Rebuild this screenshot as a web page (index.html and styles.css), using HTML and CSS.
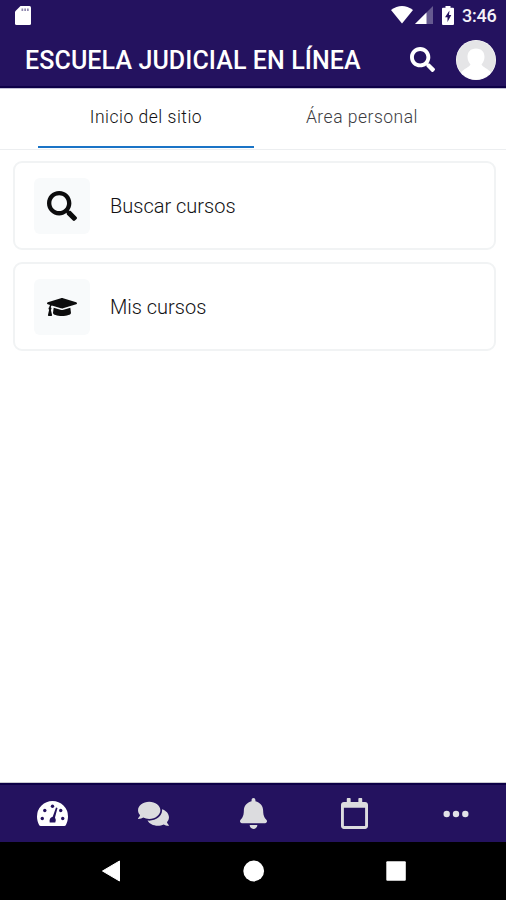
FILE: index.html
```html
<!DOCTYPE html>
<html lang="es">
<head>
<meta charset="utf-8">
<title>Escuela Judicial en Línea</title>
<link rel="stylesheet" href="styles.css">
</head>
<body>
<div class="app">
  <div class="status">
    <svg class="sd" viewBox="0 0 16 19"><path d="M5.500 0H14.500Q16 0 16 1.500V17.500Q16 19 14.500 19H1.500Q0 19 0 17.500V5.500Z" fill="#fff"/><path d="M6.500 2.500h1.700v2.500H6.500zM9.300 2.500H11v2.500H9.300zM12 2.500h1.700v2.500H12z" fill="#8f88ae"/></svg>
    <svg class="wifi" viewBox="0 0 22 18"><path d="M0 4Q11-4 22 4L11 17.500Z" fill="#fff"/></svg>
    <svg class="signal" viewBox="0 0 18 18"><path d="M0 18L18 0V18Z" fill="#665a90"/><path d="M0 18L11.500 6.500V18Z" fill="#fff"/></svg>
    <svg class="battery" viewBox="0 0 12 19"><path d="M3.500 0h5v1.800H11q1 0 1 1V18q0 1-1 1H1q-1 0-1-1V2.800q0-1 1-1h2.500Z" fill="#fff"/><path d="M7.500 4.500L3 11.200h2.500V16L9.300 9H7Z" fill="#24125f"/></svg>
    <span class="time">3:46</span>
  </div>
  <header class="header">
    <h1 class="title">ESCUELA JUDICIAL EN LÍNEA</h1>
    <svg class="find" viewBox="0 0 512 512"><path fill="#fff" d="M505 442.700L405.300 343c-4.500-4.500-10.600-7-17-7H372c27.600-35.300 44-79.700 44-128C416 93.100 322.900 0 208 0S0 93.100 0 208s93.100 208 208 208c48.300 0 92.700-16.400 128-44v16.300c0 6.400 2.500 12.500 7 17l99.700 99.700c9.400 9.400 24.600 9.400 33.900 0l28.300-28.300c9.400-9.400 9.400-24.600.1-34zM208 336c-70.700 0-128-57.200-128-128 0-70.700 57.200-128 128-128 70.700 0 128 57.200 128 128 0 70.700-57.200 128-128 128z"/></svg>
    <svg class="avatar" viewBox="0 0 40 40"><defs><clipPath id="round"><circle cx="20" cy="20" r="19.500"/></clipPath></defs><circle cx="20" cy="20" r="20" fill="#fff"/><g clip-path="url(#round)"><path d="M0 0H40V40H0Z" fill="#e5e5e7"/><path d="M20 8.500C25.500 8.500 28.500 12 28.500 17C28.500 20.500 27 22.500 25.500 24.500C27 27.500 32 28.500 35.500 33V40H4.500V33C8 28.500 13 27.500 14.500 24.500C13 22.500 11.500 20.500 11.500 17C11.500 12 14.500 8.500 20 8.500Z" fill="#fff"/></g></svg>
  </header>
  <nav class="tabs">
    <div class="tab active"><span class="t1">Inicio del sitio</span></div>
    <div class="tab"><span class="t2">Área personal</span></div>
  </nav>
  <main class="content">
    <div class="card">
      <div class="box"><svg width="30" height="30" viewBox="0 0 512 512"><path fill="#0c0c0d" d="M505 442.700L405.300 343c-4.500-4.500-10.600-7-17-7H372c27.600-35.300 44-79.700 44-128C416 93.100 322.900 0 208 0S0 93.100 0 208s93.100 208 208 208c48.300 0 92.700-16.400 128-44v16.300c0 6.400 2.500 12.500 7 17l99.700 99.700c9.400 9.400 24.600 9.400 33.900 0l28.300-28.300c9.400-9.400 9.400-24.600.1-34zM208 342c-75 0-134-59-134-134 0-75 59-134 134-134 75 0 134 59 134 134 0 75-59 134-134 134z"/></svg></div>
      <span class="c1">Buscar cursos</span>
    </div>
    <div class="card">
      <div class="box"><svg width="30" height="24" viewBox="0 0 640 512"><path fill="#0c0c0d" d="M622.340 153.200L343.400 67.500c-15.200-4.670-31.600-4.670-46.790 0L17.660 153.200c-23.540 7.230-23.540 38.360 0 45.590l48.630 14.940c-10.670 13.190-17.230 29.280-17.880 46.900C38.780 266.150 32 276.110 32 288c0 10.780 5.680 19.850 13.860 25.650L20.330 428.530C18.110 438.520 25.710 448 35.940 448h56.110c10.240 0 17.840-9.480 15.620-19.470L82.140 313.650C90.320 307.850 96 298.780 96 288c0-11.570-6.470-21.250-15.660-26.870.76-15.020 8.440-28.300 20.690-36.720L296.600 284.500c9.060 2.780 26.440 6.250 46.790 0l278.950-85.700c23.550-7.240 23.550-38.360 0-45.600zM352.790 315.090c-28.530 8.760-52.840 3.920-65.590 0l-145.020-44.550L128 384c0 35.350 85.960 64 192 64s192-28.650 192-64l-14.180-113.470-145.030 44.560z"/></svg></div>
      <span class="c2">Mis cursos</span>
    </div>
  </main>
  <nav class="bottom">
    <div class="item"><svg width="31" height="25" viewBox="0 0 31 25"><path fill="#fff" d="M15.500 0A15.500 15.500 0 0 1 31 15.500C31 18.500 30.200 21.500 28.900 24Q28.400 25 27.300 25H3.700Q2.600 25 2.100 24C.8 21.500 0 18.500 0 15.500A15.500 15.500 0 0 1 15.500 0Z"/><g fill="#24125f"><circle cx="15.500" cy="5.300" r="1.700"/><circle cx="7.800" cy="9.500" r="1.700"/><circle cx="23.700" cy="9.500" r="1.700"/><circle cx="5.300" cy="17.500" r="1.700"/><circle cx="25.700" cy="17.500" r="1.700"/><path d="M19 6.500L20.500 7L18 16.500Q19.500 19 18.300 21.500H12.700Q11.800 17 15.700 15.700Z"/></g></svg></div>
    <div class="item"><svg width="31" height="27.500" viewBox="0 0 576 512"><path fill="#dcdcdf" d="M416 192c0-88.400-93.100-160-208-160S0 103.600 0 192c0 34.300 14.100 65.900 38 92-13.400 30.200-35.500 54.200-35.800 54.500-2.200 2.300-2.800 5.700-1.500 8.700S4.800 352 8 352c36.600 0 66.900-12.300 88.700-25 32.200 15.700 70.300 25 111.300 25 114.900 0 208-71.600 208-160zm122 220c23.900-26 38-57.700 38-92 0-66.900-53.500-124.200-129.300-148.100.9 6.600 1.300 13.300 1.300 20.100 0 105.900-107.700 192-240 192-10.800 0-21.300-.8-31.700-1.900C207.800 439.600 281.800 480 368 480c41 0 79.100-9.200 111.300-25 21.800 12.700 52.100 25 88.700 25 3.200 0 6.100-1.900 7.300-4.800 1.300-2.900.7-6.300-1.500-8.700-.3-.3-22.400-24.200-35.800-54.500z"/></svg></div>
    <div class="item"><svg width="27" height="31" viewBox="0 0 448 512"><path fill="#dcdcdf" d="M224 512c35.320 0 63.970-28.650 63.970-64H160.030c0 35.350 28.650 64 63.970 64zm215.390-149.710c-19.320-20.760-55.470-51.990-55.470-154.290 0-77.700-54.480-139.900-127.940-155.160V32c0-17.670-14.320-32-31.980-32s-31.980 14.330-31.980 32v20.840C118.560 68.100 64.080 130.300 64.080 208c0 102.300-36.150 133.530-55.470 154.290-6 6.450-8.660 14.160-8.610 21.710.11 16.400 12.980 32 32.100 32h383.800c19.120 0 32-15.600 32.100-32 .05-7.550-2.610-15.270-8.610-21.710z"/></svg></div>
    <div class="item"><svg width="27" height="31" viewBox="0 0 448 512"><path fill="#dcdcdf" d="M400 64h-48V12c0-6.600-5.400-12-12-12h-40c-6.600 0-12 5.400-12 12v52H160V12c0-6.600-5.400-12-12-12h-40c-6.600 0-12 5.400-12 12v52H48C21.500 64 0 85.500 0 112v352c0 26.500 21.500 48 48 48h352c26.500 0 48-21.500 48-48V112c0-26.500-21.500-48-48-48zm-6 400H54c-3.300 0-6-2.700-6-6V160h352v298c0 3.300-2.700 6-6 6z"/></svg></div>
    <div class="item"><svg width="26" height="8" viewBox="0 0 26 8"><g fill="#e2e1e7"><circle cx="3.700" cy="4" r="3.200"/><circle cx="13" cy="4" r="3.200"/><circle cx="22.300" cy="4" r="3.200"/></g></svg></div>
  </nav>
  <div class="system">
    <svg width="22" height="22" viewBox="0 0 22 22"><path d="M2.500 11L19.500 1V21Z" fill="#fff" stroke="#fff" stroke-linejoin="round"/></svg>
    <svg width="22" height="22" viewBox="0 0 22 22"><circle cx="10.700" cy="11" r="10.400" fill="#fff"/></svg>
    <svg width="22" height="22" viewBox="0 0 22 22"><rect x="1.300" y="1.300" width="19.500" height="19.500" rx="1" fill="#fff"/></svg>
  </div>
</div>
</body>
</html>
```
FILE: styles.css
```css
* { box-sizing: border-box; }
body { margin: 0; font-family: Roboto, "Liberation Sans", sans-serif; background: #fff; }
svg { display: block; flex: none; }
.app { width: 506px; height: 900px; display: flex; flex-direction: column; overflow: hidden; }
.status { height: 30px; background: #24125f; display: flex; align-items: flex-start; padding: 6px 9px 0 15px; flex: none; }
.sd { width: 16px; height: 19px; margin-right: auto; }
.wifi { width: 22px; height: 18px; }
.signal { width: 18px; height: 18px; margin-left: 2px; }
.battery { width: 12px; height: 19px; margin-left: 9px; }
.time { color: #f4f3f8; font-size: 18px; line-height: 20px; font-weight: 500; width: 35px; margin-left: 8px; white-space: nowrap; letter-spacing: -.2px; }
.header { height: 58px; background: #24125f; border-bottom: 2px solid #0d0047; box-shadow: 0 1px 0 #c3c0d4; display: flex; align-items: center; padding: 3px 10px 0 25px; flex: none; }
.title { margin: 0 auto 0 0; padding-top: 2px; color: #fff; font-size: 25px; line-height: 30px; font-weight: 500; white-space: nowrap; letter-spacing: .1px; }
.find { width: 25px; height: 25px; margin-right: 21px; }
.avatar { width: 40px; height: 40px; }
.tabs { height: 62px; border-bottom: 1px solid #eceef0; display: flex; padding: 0 36px 0 38px; flex: none; }
.tab { width: 216px; height: 60px; display: flex; justify-content: center; align-items: center; padding-bottom: 1px; color: #3c3c3f; font-size: 17.5px; font-weight: 300; border-bottom: 2px solid transparent; white-space: nowrap; }
.active { color: #111113; border-bottom-color: #1a74c6; }
.t1, .t2 { letter-spacing: .5px; }
.content { flex: 1; padding: 11px 10px 0 13px; display: flex; flex-direction: column; gap: 12px; }
.card { height: 89px; border: 2px solid #f1f3f4; border-radius: 9px; display: flex; align-items: center; padding-left: 19px; }
.box { width: 56px; height: 56px; border-radius: 6px; background: #f8fafb; display: flex; align-items: center; justify-content: center; margin-right: 20px; }
.c1, .c2 { font-size: 20px; font-weight: 300; color: #111113; white-space: nowrap; }
.bottom { height: 59px; background: #24125f; border-top: 2px solid #0d0047; box-shadow: 0 -1px 0 #c9c9cf; display: flex; padding-left: 2px; flex: none; }
.item { flex: 1; display: flex; align-items: center; justify-content: center; }
.system { height: 58px; background: #000; display: flex; align-items: center; justify-content: space-between; padding: 0 99px 0 100px; flex: none; }
```
